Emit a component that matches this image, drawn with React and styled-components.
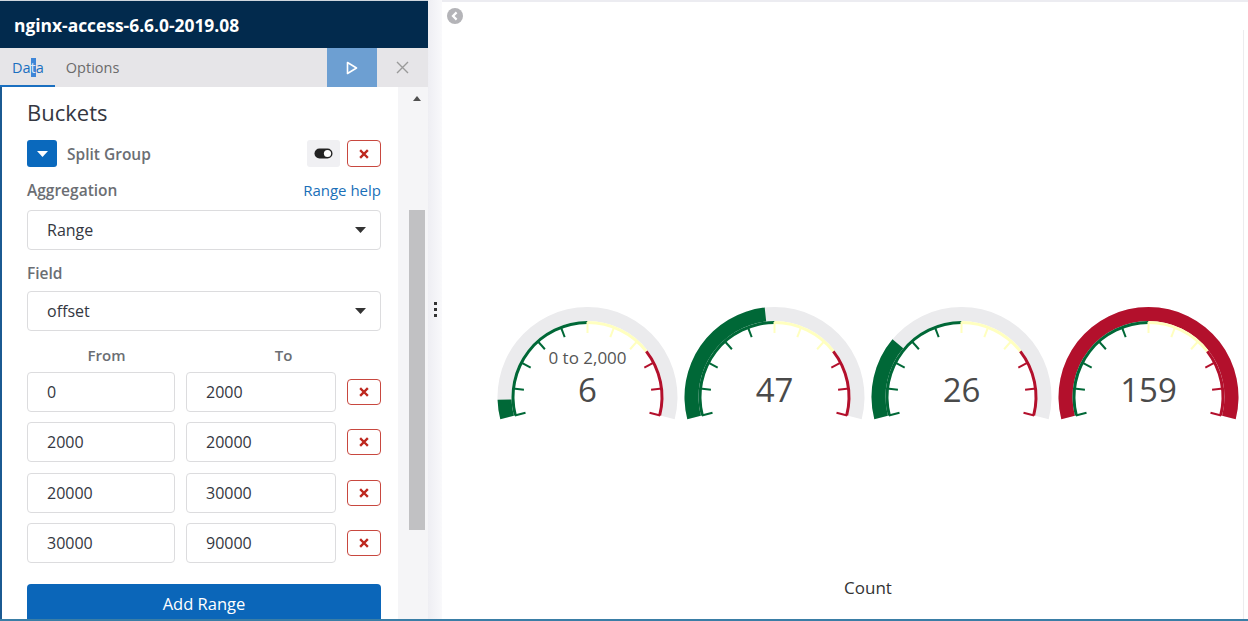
import styled, { createGlobalStyle } from 'styled-components';

const GlobalStyle = createGlobalStyle`
  html, body { margin: 0; padding: 0; background: #fff; }
  body { font-family: "Open Sans", "Liberation Sans", sans-serif; overflow: hidden; }
  * { box-sizing: border-box; }
`;

const GREEN = '#006837';
const YELLOW = '#ffffbf';
const RED = '#b3102c';

const ranges = [
  { from: 0, to: 2000 },
  { from: 2000, to: 20000 },
  { from: 20000, to: 30000 },
  { from: 30000, to: 90000 },
];

const gauges = [
  { value: 6, label: '0 to 2,000' },
  { value: 47 },
  { value: 26 },
  { value: 159 },
];

// gauge geometry
const CX = 93.5;
const CY = 95;
const START = -(Math.PI / 2 + 0.25);
const END = Math.PI / 2 + 0.25;
const angleOf = (v) => START + (END - START) * Math.min(Math.max(v, 0), 100) / 100;
const pt = (r, a) => [CX + r * Math.sin(a), CY - r * Math.cos(a)];
const arc = (r0, r1, a0, a1) => {
  const [x0, y0] = pt(r1, a0);
  const [x1, y1] = pt(r1, a1);
  const [x2, y2] = pt(r0, a1);
  const [x3, y3] = pt(r0, a0);
  const large = a1 - a0 > Math.PI ? 1 : 0;
  return `M${x0} ${y0} A${r1} ${r1} 0 ${large} 1 ${x1} ${y1} L${x2} ${y2} A${r0} ${r0} 0 ${large} 0 ${x3} ${y3} Z`;
};
const colorOf = (v) => (v < 50 ? GREEN : v < 75 ? YELLOW : RED);

const Gauge = ({ value, label }) => {
  const ticks = Array.from({ length: 11 }, (_, i) => i * 10);
  return (
    <GaugeSvg width="187" height="130" viewBox="0 0 187 130">
      <path d={arc(76, 90, START, END)} fill="#ebebed" />
      <path d={arc(76, 90, START, angleOf(value))} fill={colorOf(value)} />
      <path d={arc(73, 76, angleOf(0), angleOf(50))} fill={GREEN} />
      <path d={arc(73, 76, angleOf(50), angleOf(75))} fill={YELLOW} />
      <path d={arc(73, 76, angleOf(75), angleOf(100))} fill={RED} />
      {ticks.map((t) => {
        const a = angleOf(t);
        const [x1, y1] = pt(75, a);
        const [x2, y2] = pt(64, a);
        return <line key={t} x1={x1} y1={y1} x2={x2} y2={y2} stroke={colorOf(t === 100 ? 99 : t)} strokeWidth="2" />;
      })}
      {label && (
        <text x={CX} y="62" textAnchor="middle" fontSize="17" fill="#555" fontFamily="Open Sans, Liberation Sans, sans-serif">{label}</text>
      )}
      <text x={CX} y="100" textAnchor="middle" fontSize="33" fill="#4a4a4a" fontFamily="Open Sans, Liberation Sans, sans-serif">{value}</text>
    </GaugeSvg>
  );
};

const XIcon = () => (
  <svg width="10" height="10" viewBox="0 0 10 10">
    <path d="M2 2 L8 8 M8 2 L2 8" stroke="#bd271e" strokeWidth="2.4" strokeLinecap="square" />
  </svg>
);

const Caret = ({ color = '#333' }) => (
  <svg width="11" height="6" viewBox="0 0 11 6">
    <path d="M0 0 H11 L5.5 6 Z" fill={color} />
  </svg>
);

export default function App() {
  return (
    <Page>
      <GlobalStyle />
      <Main>
        <Sidebar>
          <Header>
            <Title>nginx-access-6.6.0-2019.08</Title>
          </Header>
          <Tabs>
            <Tab $active>Da<Selected>t</Selected>a</Tab>
            <Tab>Options</Tab>
            <Spacer />
            <PlayButton>
              <svg width="12" height="14" viewBox="0 0 12 14">
                <path d="M1.5 1.5 L10.5 7 L1.5 12.5 Z" fill="none" stroke="#fff" strokeWidth="1.6" strokeLinejoin="round" />
              </svg>
            </PlayButton>
            <CloseButton>
              <svg width="13" height="13" viewBox="0 0 13 13">
                <path d="M1 1 L12 12 M12 1 L1 12" stroke="#9a9a9a" strokeWidth="1.4" />
              </svg>
            </CloseButton>
          </Tabs>
          <Body>
            <Editor>
              <SectionTitle>Buckets</SectionTitle>
              <AggHeader>
                <ToggleButton><Caret color="#fff" /></ToggleButton>
                <AggTitle>Split Group</AggTitle>
                <Spacer />
                <IconButton>
                  <svg width="19" height="11" viewBox="0 0 19 11">
                    <rect x="0.5" y="0.5" width="18" height="10" rx="5" fill="#222" />
                    <circle cx="13.5" cy="5.5" r="3.6" fill="#fff" />
                  </svg>
                </IconButton>
                <DeleteButton $tall><XIcon /></DeleteButton>
              </AggHeader>
              <LabelRow $gap={13}>
                <Label>Aggregation</Label>
                <HelpLink>Range help</HelpLink>
              </LabelRow>
              <Select $gap={10}>
                <span>Range</span>
                <Caret />
              </Select>
              <LabelRow $gap={13}>
                <Label>Field</Label>
              </LabelRow>
              <Select $gap={8}>
                <span>offset</span>
                <Caret />
              </Select>
              <RangeHeader>
                <ColLabel>From</ColLabel>
                <ColLabel>To</ColLabel>
              </RangeHeader>
              <RangeList>
                {ranges.map((r, i) => (
                  <RangeRow key={i}>
                    <Input defaultValue={r.from} />
                    <Input defaultValue={r.to} />
                    <DeleteButton><XIcon /></DeleteButton>
                  </RangeRow>
                ))}
              </RangeList>
              <AddButton>Add Range</AddButton>
            </Editor>
            <Scrollbar>
              <ScrollArrow />
              <ScrollThumb />
            </Scrollbar>
          </Body>
        </Sidebar>
        <Handle>
          <Dots><i /><i /><i /></Dots>
        </Handle>
        <Vis>
          <TopBar>
            <Collapse>
              <svg width="16" height="16" viewBox="0 0 16 16">
                <circle cx="8" cy="8" r="8" fill="#b4b4b8" />
                <path d="M9.6 4.4 L6 8 L9.6 11.6" fill="none" stroke="#fff" strokeWidth="2.2" />
              </svg>
            </Collapse>
          </TopBar>
          <Canvas>
            <GaugeRow>
              {gauges.map((g, i) => (
                <Gauge key={i} value={g.value} label={g.label} />
              ))}
            </GaugeRow>
            <AxisTitle>Count</AxisTitle>
          </Canvas>
        </Vis>
      </Main>
      <BottomLine />
    </Page>
  );
}

const Page = styled.div`
  width: 1248px;
  height: 621px;
  display: flex;
  flex-direction: column;
  overflow: hidden;
`;

const Main = styled.div`
  height: 619px;
  display: flex;
`;

const Sidebar = styled.div`
  width: 428px;
  display: flex;
  flex-direction: column;
`;

const Header = styled.div`
  height: 48px;
  background: #022a4d;
  display: flex;
  align-items: center;
  padding-left: 14px;
  border-top: 1px solid #cfd6de;
`;

const Title = styled.div`
  color: #fff;
  font-weight: 700;
  font-size: 17.4px;
`;

const Tabs = styled.div`
  height: 39px;
  background: #e6e5e8;
  display: flex;
  align-items: stretch;
`;

const Tab = styled.div`
  display: flex;
  align-items: center;
  padding: 2px 11px 0 ${(p) => (p.$active ? 12 : 11)}px;
  font-size: 14.5px;
  color: ${(p) => (p.$active ? '#1a6fc0' : '#6b6b6b')};
  border-bottom: 2px solid ${(p) => (p.$active ? '#1a6fc0' : 'transparent')};
`;

const Selected = styled.span`
  background: #3f86d8;
  color: #dce9f7;
`;

const Spacer = styled.div`
  flex: 1;
`;

const PlayButton = styled.div`
  width: 50px;
  background: #6d9fd2;
  display: flex;
  align-items: center;
  justify-content: center;
`;

const CloseButton = styled.div`
  width: 51px;
  display: flex;
  align-items: center;
  justify-content: center;
`;

const Body = styled.div`
  flex: 1;
  display: flex;
  overflow: hidden;
`;

const Editor = styled.div`
  width: 398px;
  background: #fff;
  border-left: 2px solid #1b5a92;
  padding: 10px 17px 0 25px;
  overflow: hidden;
`;

const SectionTitle = styled.div`
  font-size: 22px;
  line-height: 30px;
  color: #343741;
`;

const AggHeader = styled.div`
  margin-top: 13px;
  height: 27px;
  display: flex;
  align-items: center;
`;

const ToggleButton = styled.div`
  width: 30px;
  height: 27px;
  border-radius: 3px;
  background: #0a69bd;
  display: flex;
  align-items: center;
  justify-content: center;
`;

const AggTitle = styled.div`
  margin-left: 10px;
  font-size: 15.5px;
  font-weight: 600;
  color: #6b6e73;
`;

const IconButton = styled.div`
  width: 33px;
  height: 27px;
  border-radius: 3px;
  background: #f0f0f3;
  display: flex;
  align-items: center;
  justify-content: center;
`;

const DeleteButton = styled.div`
  width: 34px;
  height: ${(p) => (p.$tall ? 27 : 26)}px;
  margin-left: ${(p) => (p.$tall ? 7 : 0)}px;
  border: 1px solid #c8483f;
  border-radius: 4px;
  background: #fff;
  display: flex;
  align-items: center;
  justify-content: center;
  align-self: center;
`;

const LabelRow = styled.div`
  margin-top: ${(p) => p.$gap}px;
  height: 20px;
  display: flex;
  align-items: center;
  justify-content: space-between;
`;

const Label = styled.div`
  font-size: 15.5px;
  font-weight: 600;
  color: #6b6e73;
`;

const HelpLink = styled.div`
  font-size: 15px;
  color: #1a6fb8;
`;

const Select = styled.div`
  margin-top: ${(p) => p.$gap}px;
  height: 40px;
  border: 1px solid #dcdcde;
  border-radius: 4px;
  display: flex;
  align-items: center;
  justify-content: space-between;
  padding: 0 14px 0 19px;
  font-size: 16px;
  color: #343741;
`;

const RangeHeader = styled.div`
  margin-top: 14px;
  height: 20px;
  display: grid;
  grid-template-columns: 159px 195px;
  align-items: center;
`;

const ColLabel = styled.div`
  text-align: center;
  font-size: 15px;
  font-weight: 600;
  color: #6b6e73;
`;

const RangeList = styled.div`
  margin-top: 7px;
  display: flex;
  flex-direction: column;
  gap: 10.3px;
`;

const RangeRow = styled.div`
  display: grid;
  grid-template-columns: 148px 150px 34px;
  column-gap: 11px;
  height: 40px;
`;

const Input = styled.input`
  height: 40px;
  width: 100%;
  border: 1px solid #dcdcde;
  border-radius: 4px;
  padding: 0 0 0 19px;
  font-family: "Open Sans", "Liberation Sans", sans-serif;
  font-size: 16px;
  color: #343741;
  background: #fff;
  outline: none;
`;

const AddButton = styled.div`
  margin-top: 21px;
  height: 40px;
  border-radius: 4px;
  background: #0b66b9;
  color: #fff;
  font-size: 16.5px;
  display: flex;
  align-items: center;
  justify-content: center;
`;

const Scrollbar = styled.div`
  width: 30px;
  background: #f5f5f7;
  padding-top: 9px;
`;

const ScrollArrow = styled.div`
  margin-left: 15px;
  width: 0;
  height: 0;
  border-left: 4px solid transparent;
  border-right: 4px solid transparent;
  border-bottom: 5px solid #505050;
`;

const ScrollThumb = styled.div`
  margin: 109px 0 0 11px;
  width: 16px;
  height: 320px;
  background: #c1c1c3;
`;

const Handle = styled.div`
  width: 14px;
  background: linear-gradient(to right, #eeeef3, #f9f9fb);
  display: flex;
  align-items: center;
  justify-content: center;
`;

const Dots = styled.div`
  display: flex;
  flex-direction: column;
  gap: 3px;
  i {
    display: block;
    width: 3px;
    height: 3px;
    background: #333;
  }
`;

const Vis = styled.div`
  flex: 1;
  display: flex;
  flex-direction: column;
  border-top: 2px solid #ececf1;
`;

const TopBar = styled.div`
  height: 28px;
  padding: 6px 0 0 5px;
`;

const Collapse = styled.div`
  width: 16px;
  height: 16px;
  svg { display: block; }
`;

const Canvas = styled.div`
  flex: 1;
  margin-right: 4px;
  border-right: 1px solid #ececee;
  padding-left: 52px;
`;

const GaugeRow = styled.div`
  margin-top: 272px;
  display: grid;
  grid-template-columns: repeat(4, 187px);
`;

const GaugeSvg = styled.svg`
  display: block;
`;

const AxisTitle = styled.div`
  width: 748px;
  margin-top: 144px;
  text-align: center;
  font-size: 17px;
  line-height: 24px;
  color: #333;
`;

const BottomLine = styled.div`
  height: 2px;
  background: #3a7ea6;
`;
